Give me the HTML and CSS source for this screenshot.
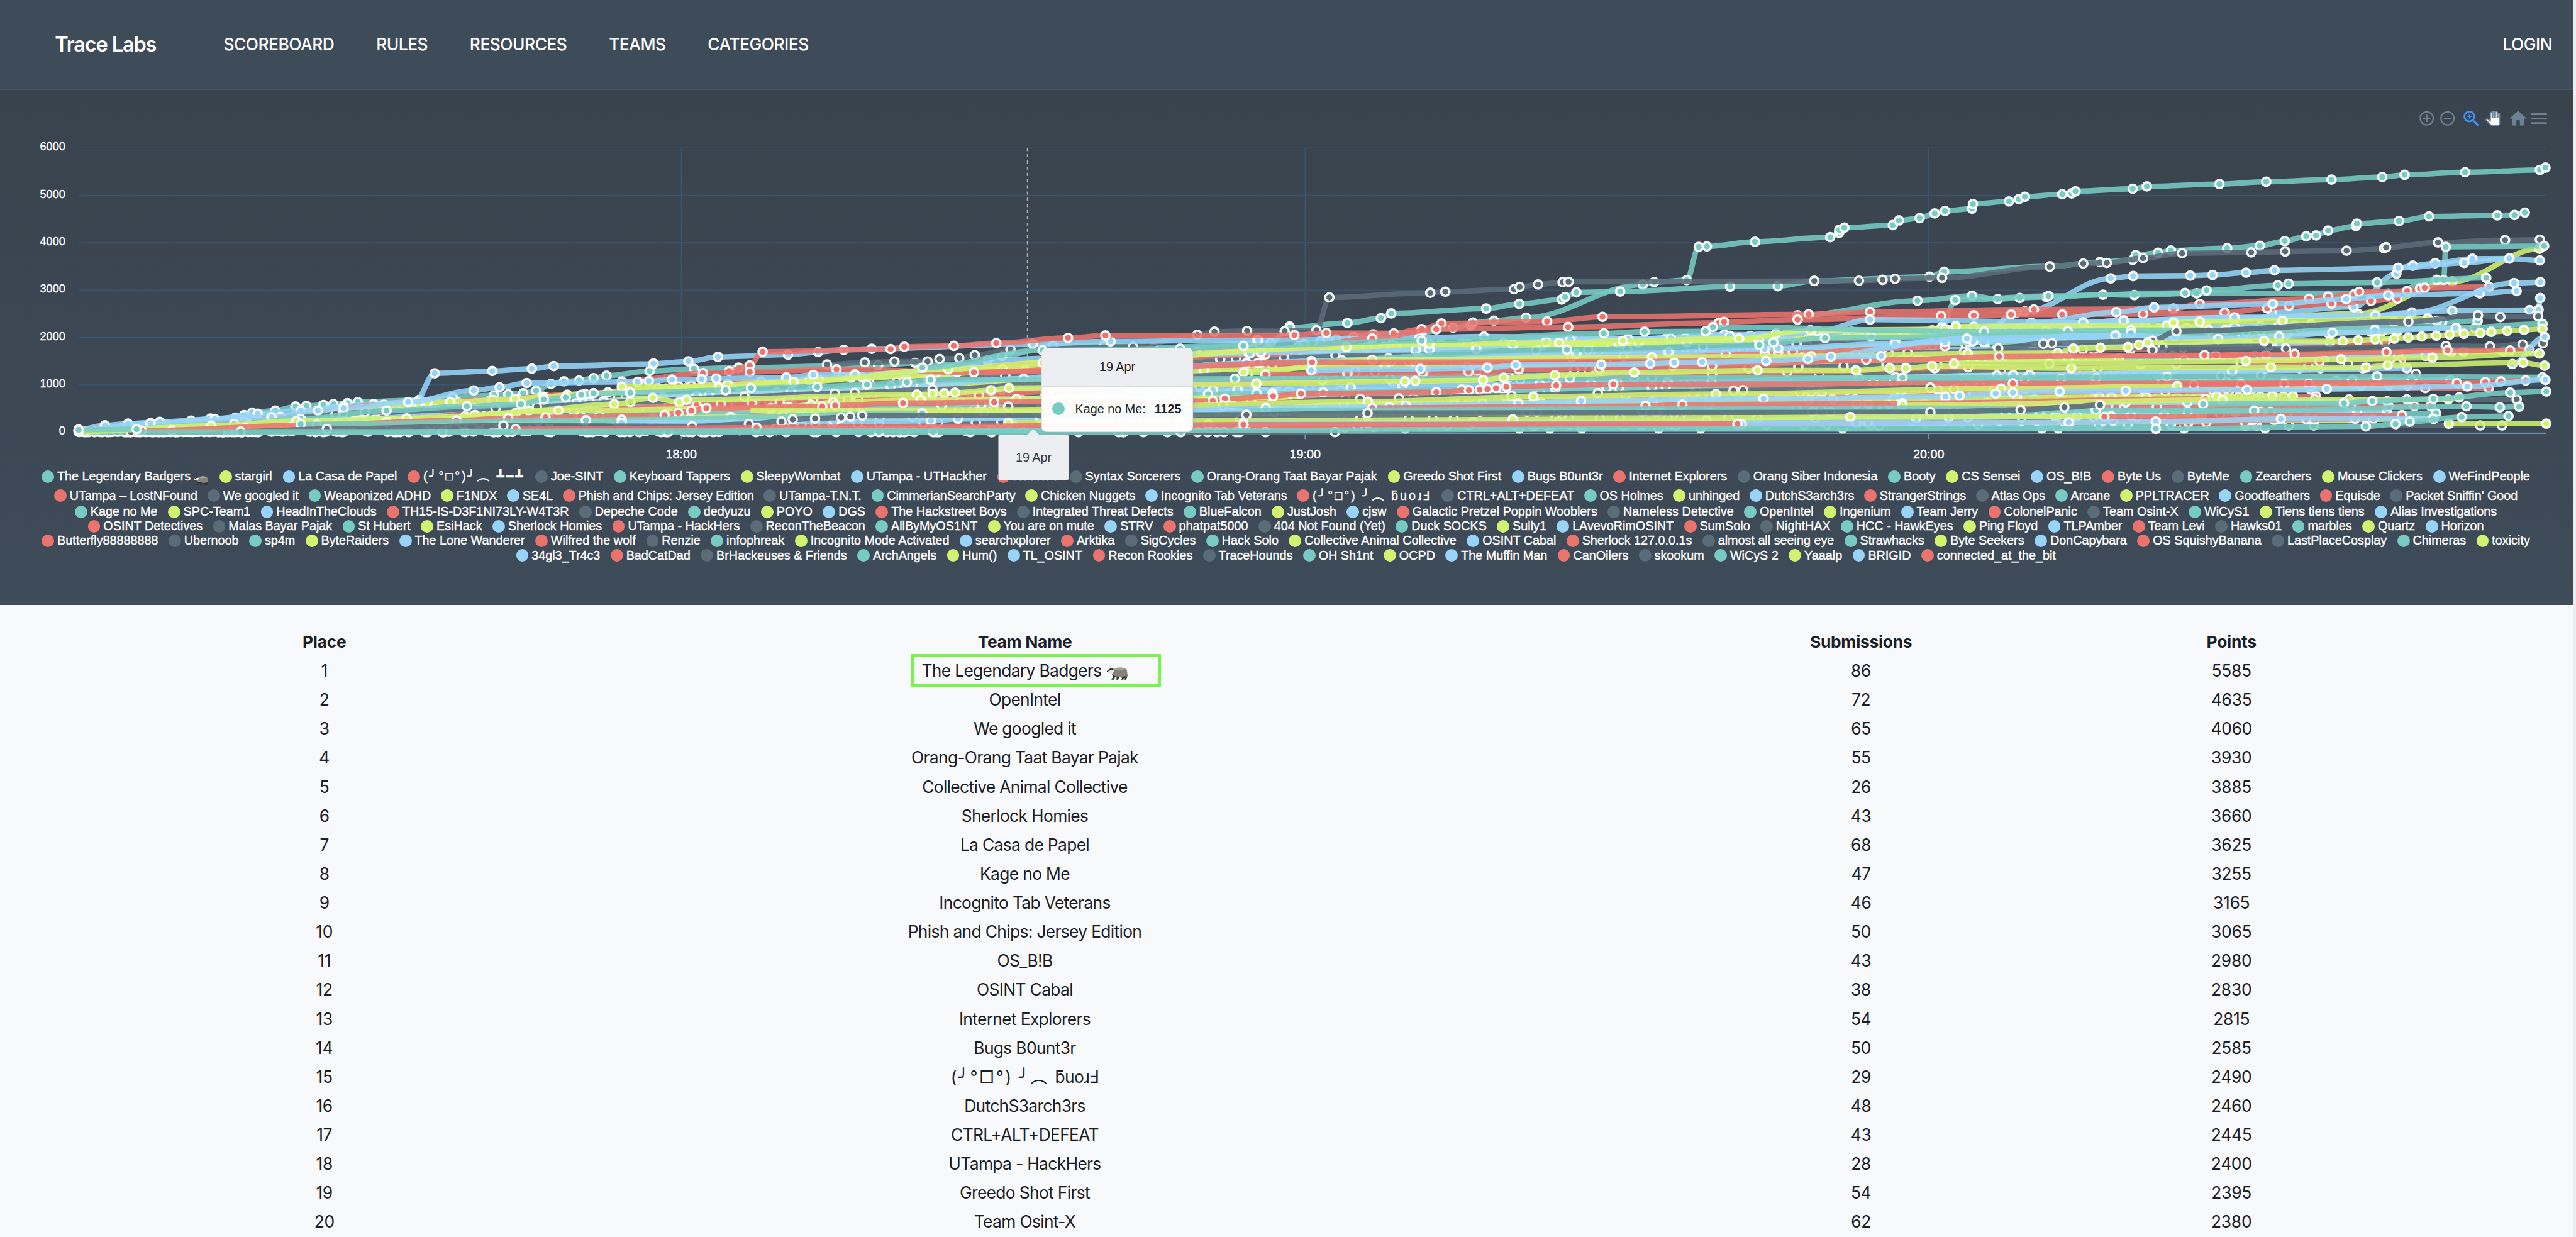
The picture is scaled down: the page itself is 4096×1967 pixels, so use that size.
FILE: index.html
```html
<!DOCTYPE html>
<html lang="en">
<head>
<meta charset="utf-8">
<title>Trace Labs Scoreboard</title>
<link rel="stylesheet" href="styles.css">
</head>
<body>
<div class="page">
  <nav class="navbar">
    <a class="brand">Trace Labs</a>
    <ul class="nav-links">
      <li>SCOREBOARD</li><li>RULES</li><li>RESOURCES</li><li>TEAMS</li><li>CATEGORIES</li>
    </ul>
    <a class="login">LOGIN</a>
  </nav>

  <section class="chart-panel">
    <svg class="chart" viewBox="0 174 4967 726" id="chart">
      <g id="grid"></g>
      <g id="series"></g>
      <g class="tools">
        <svg x="4667.2" y="212.2" width="33.6" height="33.6" viewBox="0 0 24 24"><path d="M13 7h-2v4H7v2h4v4h2v-4h4v-2h-4V7zm-1-5C6.48 2 2 6.48 2 12s4.48 10 10 10 10-4.48 10-10S17.52 2 12 2zm0 18c-4.41 0-8-3.59-8-8s3.59-8 8-8 8 3.59 8 8-3.59 8-8 8z"/></svg>
        <svg x="4707.2" y="212.2" width="33.6" height="33.6" viewBox="0 0 24 24"><path d="M7 11v2h10v-2H7zm5-9C6.48 2 2 6.48 2 12s4.48 10 10 10 10-4.48 10-10S17.52 2 12 2zm0 18c-4.41 0-8-3.59-8-8s3.59-8 8-8 8 3.59 8 8-3.59 8-8 8z"/></svg>
        <svg class="active" x="4750" y="209" width="41" height="41" viewBox="0 0 24 24"><path d="M15.5 14h-.79l-.28-.27C15.41 12.59 16 11.11 16 9.5 16 5.91 13.09 3 9.5 3S3 5.91 3 9.5 5.91 16 9.5 16c1.61 0 3.09-.59 4.23-1.57l.27.28v.79l5 4.99L20.49 19l-4.99-5zm-6 0C7.01 14 5 11.99 5 9.5S7.01 5 9.5 5 14 7.01 14 9.5 11.99 14 9.5 14z"/><path d="M12 10h-2v2H9v-2H7V9h2V7h1v2h2v1z"/></svg>
        <svg class="hand" x="4797" y="214" width="29" height="29" viewBox="0 0 24 24"><path d="M23 5.5V20c0 2.2-1.8 4-4 4h-7.3c-1.08 0-2.1-.43-2.85-1.19L1 14.83s1.26-1.23 1.3-1.25c.22-.19.49-.29.79-.29.22 0 .42.06.6.16.04.01 4.31 2.46 4.31 2.46V4c0-.83.67-1.5 1.5-1.5S11 3.17 11 4v7h1V1.5c0-.83.67-1.5 1.5-1.5S15 .67 15 1.5V11h1V2.5c0-.83.67-1.5 1.5-1.5s1.5.67 1.5 1.5V11h1V5.5c0-.83.67-1.5 1.5-1.5s1.5.67 1.5 1.5z"/></svg>
        <svg x="4840.3" y="209.3" width="40" height="40" viewBox="0 0 24 24"><path d="M10 20v-6h4v6h5v-8h3L12 3 2 12h3v8z"/></svg>
        <svg x="4880" y="208.8" width="41" height="41" viewBox="0 0 24 24"><path d="M3 18h18v-2H3v2zm0-5h18v-2H3v2zm0-7v2h18V6H3z"/></svg>
      </g>
    </svg>
    <div class="legend" id="legend"></div>
    <div class="tooltip">
      <div class="tooltip-title">19 Apr</div>
      <div class="tooltip-body"><i class="dot c0"></i><span>Kage no Me:</span><b>1125</b></div>
    </div>
    <div class="x-tooltip">19 Apr</div>
  </section>

  <section class="board">
    <table>
      <colgroup><col class="w-place"><col class="w-team"><col class="w-subs"><col class="w-points"></colgroup>
      <thead><tr><th>Place</th><th>Team Name</th><th>Submissions</th><th>Points</th></tr></thead>
      <tbody>
        <tr><td>1</td><td class="first">The Legendary Badgers <svg class="badger" viewBox="0 0 41 24"><use href="#badger"/></svg></td><td>86</td><td>5585</td></tr>
        <tr><td>2</td><td>OpenIntel</td><td>72</td><td>4635</td></tr>
        <tr><td>3</td><td>We googled it</td><td>65</td><td>4060</td></tr>
        <tr><td>4</td><td>Orang-Orang Taat Bayar Pajak</td><td>55</td><td>3930</td></tr>
        <tr><td>5</td><td>Collective Animal Collective</td><td>26</td><td>3885</td></tr>
        <tr><td>6</td><td>Sherlock Homies</td><td>43</td><td>3660</td></tr>
        <tr><td>7</td><td>La Casa de Papel</td><td>68</td><td>3625</td></tr>
        <tr><td>8</td><td>Kage no Me</td><td>47</td><td>3255</td></tr>
        <tr><td>9</td><td>Incognito Tab Veterans</td><td>46</td><td>3165</td></tr>
        <tr><td>10</td><td>Phish and Chips: Jersey Edition</td><td>50</td><td>3065</td></tr>
        <tr><td>11</td><td>OS_B!B</td><td>43</td><td>2980</td></tr>
        <tr><td>12</td><td>OSINT Cabal</td><td>38</td><td>2830</td></tr>
        <tr><td>13</td><td>Internet Explorers</td><td>54</td><td>2815</td></tr>
        <tr><td>14</td><td>Bugs B0unt3r</td><td>50</td><td>2585</td></tr>
        <tr><td>15</td><td><span class="flip">(╯°□°)<span class="arm">╯</span>︵ </span>ƃuoɹℲ</td><td>29</td><td>2490</td></tr>
        <tr><td>16</td><td>DutchS3arch3rs</td><td>48</td><td>2460</td></tr>
        <tr><td>17</td><td>CTRL+ALT+DEFEAT</td><td>43</td><td>2445</td></tr>
        <tr><td>18</td><td>UTampa - HackHers</td><td>28</td><td>2400</td></tr>
        <tr><td>19</td><td>Greedo Shot First</td><td>54</td><td>2395</td></tr>
        <tr><td>20</td><td>Team Osint-X</td><td>62</td><td>2380</td></tr>
      </tbody>
    </table>
  </section>
</div>
<svg class="defs" width="0" height="0"><defs>
  <g id="badger">
    <path d="M37 6c2 3 3 8 3 12l-2-1c0-4-1-7-3-9z" fill="#6b675f"/>
    <path d="M10 13l2 7-3 2v2h5l2-6 3 2-1 3v1h4l2-6h4l1 4-1 1v1h4l1-5 2 3-1 2h3l2-5-2-6z" fill="#33312d"/>
    <path d="M11 5c5-5 19-6 25-2 4 3 4 9 2 14-6 2-18 2-25-1-4-2-5-7-2-11z" fill="#85827a"/>
    <path d="M13 4c6-4 17-4 22 0-5 2-16 3-22 0z" fill="#a5a299"/>
    <path d="M0 8c3-4 7-7 12-6l2 5-3 5c-4 1-9 0-11-4z" fill="#e9e4dc"/>
    <path d="M2 6c3-3 6-5 10-4l1 3c-4-1-7 1-10 3z" fill="#33302c"/>
    <circle cx="1" cy="8" r="1.2" fill="#222"/>
  </g>
</defs></svg>
<script src="chart.js"></script>
</body>
</html>
```
FILE: styles.css
```css
:root {
  --u: 0.823813px;
  --white: #fff;
}
*, *::before, *::after { box-sizing: border-box; }
html, body { margin: 0; height: 100%; }
body {
  background: #ededed;
  overflow: hidden;
  font-family: Inter, "Noto Sans", "DejaVu Sans", "Noto Sans CJK JP", sans-serif;
  font-size: calc(32 * var(--u));
  color: #1b2027;
}
.page {
  width: calc(4967 * var(--u));
  height: calc(2388 * var(--u));
  overflow: hidden;
  background: #f8f9fb;
}
.defs { position: absolute; }

.navbar {
  display: flex;
  align-items: center;
  height: calc(174 * var(--u));
  padding: 0 calc(41 * var(--u)) calc(2 * var(--u)) calc(106 * var(--u));
  background: #3e4b58;
  border-bottom: calc(2 * var(--u)) solid #445564;
  color: var(--white);
  font-weight: 500;
}
.brand {
  width: calc(325.5 * var(--u));
  font-size: calc(39.5 * var(--u));
  font-weight: 600;
  letter-spacing: calc(-1.4 * var(--u));
}
.nav-links {
  display: flex;
  flex: 1;
  gap: calc(81 * var(--u));
  margin: 0;
  padding: 0;
  list-style: none;
}
.nav-links, .login { letter-spacing: calc(-0.6 * var(--u)); }

.chart-panel {
  position: relative;
  height: calc(994 * var(--u));
  background: linear-gradient(#39434e, #3e4b58);
}
.chart { display: block; width: 100%; height: calc(726 * var(--u)); }
.chart text { font-family: "Liberation Sans", Arial, sans-serif; fill: #fff; stroke: #fff; stroke-width: .5; }
.y-label { font-size: 22px; text-anchor: end; }
.x-label { font-size: 24px; text-anchor: middle; }
.grid-line { stroke: #3b536b; stroke-width: 2; }
.axis { stroke: #78909c; stroke-width: 2; }
.cursor { stroke: #b6b6b6; stroke-width: 2; stroke-dasharray: 6; }
.line { fill: none; stroke-width: 10.4; stroke-opacity: .87; }
.mark { stroke: #fff; stroke-width: 4.4; stroke-opacity: .93; }
.tools { fill: #6e8192; }
.tools .active { fill: #4492f7; }
.tools .hand { fill: #fff; stroke: #6e8192; stroke-width: 2; }

.legend {
  display: flex;
  flex-direction: column;
  align-items: center;
  padding: calc(6 * var(--u)) calc(3 * var(--u)) 0 0;
  font: calc(24 * var(--u))/calc(28 * var(--u)) "Liberation Sans", "Noto Sans", "DejaVu Sans", "Noto Sans CJK JP", sans-serif;
  color: #fff;
  -webkit-text-stroke: .4px #fff;
}
.legend-row {
  display: flex;
  justify-content: space-between;
  height: calc(28 * var(--u));
  white-space: nowrap;
}
.legend-row:nth-child(1) { margin-bottom: calc(9 * var(--u)); }
.legend-row:nth-child(2) { margin-bottom: calc(3 * var(--u)); }
.item { display: flex; align-items: center; gap: calc(6 * var(--u)); }
.item .badger { width: calc(29 * var(--u)); height: calc(17 * var(--u)); margin-top: calc(14 * var(--u)); }
.flip { letter-spacing: .1em; }
.arm { margin-left: .35em; }
.item .flip { letter-spacing: .15em; }
.dot {
  width: calc(24 * var(--u));
  height: calc(24 * var(--u));
  border-radius: 50%;
  flex: none;
}
.c0 { background: #77cbc3; }
.c1 { background: #d2f271; }
.c2 { background: #97d4f8; }
.c3 { background: #ea736d; }
.c4 { background: #5b6c79; }

.tooltip {
  position: absolute;
  left: calc(2010 * var(--u));
  top: calc(497 * var(--u));
  width: calc(293 * var(--u));
  height: calc(163 * var(--u));
  border: calc(2 * var(--u)) solid #e3e3e3;
  border-radius: calc(10 * var(--u));
  overflow: hidden;
  background: rgba(255, 255, 255, .96);
  box-shadow: 2px 2px 10px -4px #999;
  font: calc(24 * var(--u)) "Liberation Sans", Arial, sans-serif;
}
.tooltip-title {
  display: flex;
  align-items: center;
  justify-content: center;
  height: calc(74 * var(--u));
  background: #eceef1;
  border-bottom: calc(2 * var(--u)) solid #dadcdf;
}
.tooltip-body {
  display: flex;
  align-items: center;
  height: calc(86 * var(--u));
  padding-left: calc(20 * var(--u));
}
.tooltip-body .dot { margin-right: calc(20 * var(--u)); }
.tooltip-body b { margin-left: calc(17 * var(--u)); }
.x-tooltip {
  position: absolute;
  left: calc(1926 * var(--u));
  top: calc(665 * var(--u));
  width: calc(138 * var(--u));
  height: calc(88 * var(--u));
  display: flex;
  align-items: center;
  justify-content: center;
  background: #eceef1;
  border: calc(2 * var(--u)) solid #90a4ae;
  border-radius: calc(4 * var(--u));
  font: calc(24 * var(--u)) "Liberation Sans", Arial, sans-serif;
  color: #373d3f;
}
.x-tooltip::before {
  content: "";
  position: absolute;
  left: 50%;
  top: calc(-12 * var(--u));
  margin-left: calc(-12 * var(--u));
  border: calc(12 * var(--u)) solid transparent;
  border-top: 0;
  border-bottom-color: #eceef1;
}

.board { padding: calc(43 * var(--u)) 0 0 calc(2 * var(--u)); }
table {
  width: calc(4134 * var(--u));
  margin: 0 auto;
  table-layout: fixed;
  border-collapse: collapse;
  text-align: center;
}
.w-place { width: calc(417 * var(--u)); }
.w-team { width: calc(2287 * var(--u)); }
.w-subs { width: calc(941 * var(--u)); }
.w-points { width: calc(489 * var(--u)); }
th, td {
  height: calc(56 * var(--u));
  padding: 0;
  line-height: calc(48 * var(--u));
  letter-spacing: calc(-0.35 * var(--u));
}
td:nth-child(2) { letter-spacing: calc(-0.8 * var(--u)); }
th { font-weight: 700; }
.board .badger { width: calc(41 * var(--u)); height: calc(24 * var(--u)); margin-left: calc(2 * var(--u)); vertical-align: calc(-6 * var(--u)); }
.first { position: relative; }
.first::after {
  content: "";
  position: absolute;
  left: calc(925 * var(--u));
  top: calc(-5 * var(--u));
  width: calc(481 * var(--u));
  height: calc(63 * var(--u));
  border: calc(5 * var(--u)) solid #78f54a;
}
```
FILE: chart.js
```js
const COLORS = ['#77cbc3', '#d2f271', '#97d4f8', '#ea736d', '#5b6c79'];
const T = 0, L = 1, B = 2, R = 3, G = 4;
const Y0 = 834.6, STEP = 91.43;
const NS = 'http://www.w3.org/2000/svg';

function add(parent, tag, attrs, text) {
  const el = document.createElementNS(NS, tag);
  for (const k in attrs) el.setAttribute(k, attrs[k]);
  if (text) el.textContent = text;
  parent.appendChild(el);
}

// Time windows: each maps its own samples to chart coordinates.
const win = (x0, y0, sx, sy) => (...p) => {
  const out = [];
  for (let i = 0; i < p.length; i += 2) out.push([x0 + p[i] / sx, y0 + p[i + 1] / sy]);
  return out;
};
const w17 = win(0, 250, 1.2062, 2.45);
const w18 = win(1200, 550, 1.2062, 3);
const w19 = win(2400, 250, 1.2062, 2.45);
const w20 = win(3672, 250, 1.2062, 2.45);

const grid = document.getElementById('grid');
for (let v = 0; v <= 6; v++) {
  const y = Y0 - v * STEP;
  add(grid, 'line', { class: 'grid-line', x1: 152, x2: 4914, y1: y, y2: y });
  add(grid, 'text', { class: 'y-label', x: 126, y: y + 5 }, String(v * 1000));
}
[[1315, '18:00'], [2519, '19:00'], [3722.6, '20:00']].forEach(([x, t]) => {
  add(grid, 'line', { class: 'grid-line', x1: x, x2: x, y1: 286, y2: 836 });
  add(grid, 'line', { class: 'axis', x1: x, x2: x, y1: 836, y2: 848 });
  add(grid, 'text', { class: 'x-label', x, y: 885 }, t);
});
add(grid, 'line', { class: 'axis', x1: 152, x2: 4914, y1: 837, y2: 837 });
add(grid, 'line', { class: 'cursor', x1: 1983, x2: 1983, y1: 286, y2: 836 });

const root = document.getElementById('series');
function draw(color, pts, hidden) {
  let d = '';
  pts.forEach(([x, y], i) => {
    if (!i) { d = `M${x.toFixed(1)} ${y.toFixed(1)}`; return; }
    const [px, py] = pts[i - 1], k = (x - px) * 0.35;
    d += `C${(px + k).toFixed(1)} ${py.toFixed(1)} ${(x - k).toFixed(1)} ${y.toFixed(1)} ${x.toFixed(1)} ${y.toFixed(1)}`;
  });
  add(root, 'path', { class: 'line', d, stroke: COLORS[color] });
  pts.forEach(([x, y], i) => {
    if (hidden && hidden(i)) return;
    add(root, 'circle', { class: 'mark', cx: x.toFixed(1), cy: y.toFixed(1), r: 8, fill: COLORS[color] });
  });
}

// Leading teams
draw(T, [...w17(183,1421,318,1418,388,1395,445,1378,490,1368,548,1364,568,1352,587,1340,641,1330,688,1311,713,1308,753,1304,776,1300,809,1295,833,1290,976,1280,1054,1268,1150,1258,1183,1253,1218,1248,1248,1236,1283,1204,1313,1192,1348,1188,1382,1177,1412,1165),
  ...w18(65,500,168,487,272,480,597,466,683,453,852,480,1411,465),
  ...w19(33,1105,128,1027,141,1016,179,1004,216,993,256,982,302,970,415,960,488,938,529,927,534,914,583,905,658,891,930,735,956,723,1032,713,1060,556,1079,554,1191,532,1366,510,1387,490,1387,476,1399,465,1512,453,1526,431),
  ...w20(40,420,75,398,99,386,162,375,164,353,248,341,271,330,285,319,372,307,394,303,403,293,536,281,569,270,738,259,847,248,999,238,1117,226,1169,215,1310,203,1484,192,1497,181)]);
draw(T, [...w18(852,438,886,412,1004,353,1122,353,1238,365,1511,337,1555,242),
  ...w19(108,938,242,916,320,893,344,871,565,848,642,826,741,805,749,793,775,771,877,767,1133,744,1244,742,1329,717),
  ...w20(63,697,97,674,343,648,460,628,536,618,543,595,595,584,625,573,756,562,832,551,890,529,940,506,963,502,991,479,1056,457,1058,446,1156,434,1226,412,1385,407,1425,405,1449,394)]);
draw(G, [...w18(478,462,566,450,635,445,712,445,740,430,786,425,822,408,905,375,1190,360,1340,290,1380,272,1456,268),
  ...w19(96,955,170,950,200,795,435,773,470,768,630,756,643,745,686,734,743,723,757,721,1329,717,1433,716,1488,712,1517,707),
  ...w20(92,703,343,650,421,635,476,632,560,609,651,586,812,582,891,578,1034,574,1121,563,1126,558,1247,535,1403,524,1484,522)]);
draw(L, w20(700,905,1060,872,1280,720,1483,565));
draw(T, [...w19(1290,880), ...w20(35,811,162,787,222,803,273,798,335,793,467,782,540,784,685,776,1131,777,1244,712,1260,713,1265,556,1494,552)]);
draw(B, [...w17(183,1421,244,1400,298,1392,372,1384,500,1370,600,1345,700,1330,800,1310,870,1300,965,1295,1012,1154,1146,1143,1238,1132,1289,1120,1521,1109),
  ...w18(74,457,155,444,224,418,387,405,457,390,517,377,582,371,957,343,1138,328,1480,320),
  ...w19(34,997,410,985,560,980,896,992,1120,970), ...w20(182,980,265,867,285,861,485,705,537,694,670,692,722,689,800,678,866,667,1154,656,1188,645,1240,633,1327,612,1413,611)]);
draw(B, w20(860,866,1050,840,1150,683,1154,656,1308,632,1413,611,1484,620));
draw(T, w20(92,935,123,808,340,788,658,774,708,762,874,738,899,730,1105,724,1359,703));

// The field: seeded so the chart is identical on every load.
let seed = 20240419;
const rnd = () => (seed = (seed * 1664525 + 1013904223) % 4294967296) / 4294967296;
const env = [[152, 40], [400, 300], [650, 560], [950, 700], [1315, 1000], [1900, 1380], [2300, 1800], [2700, 1950], [3300, 2080], [3700, 2250], [4300, 2400], [4910, 2550]];
function cap(x) {
  for (let i = 1; i < env.length; i++) if (x <= env[i][0]) {
    const [a, u] = env[i - 1], [b, v] = env[i];
    return u + (v - u) * (x - a) / (b - a);
  }
  return 2550;
}
for (let s = 0; s < 84; s++) {
  const f = 0.04 + 0.92 * (s * 0.618 % 1), pts = [];
  const start = rnd() < .75 ? 152 + rnd() * 350 : 600 + rnd() * 1200;
  const drift = (rnd() - .5) * .35;
  let x = start, last = 0;
  const end = 4100 + rnd() * 810;
  pts.push([x, Y0 - rnd() * .5]);
  while (true) {
    const slow = x > 2300 ? 1.5 : 1;
    x += slow * (rnd() < .5 ? 12 + rnd() * 55 : 60 + rnd() * 210);
    if (x > end) break;
    const g = Math.min(.97, Math.max(.02, f + drift * ((x - 152) / 4762 - .5)));
    const ease = Math.min(1, (x - start) / 500 + .08);
    const v = cap(x) * g * ease;
    last = Math.max(last, Math.round(v / 10) * 10);
    pts.push([x, Y0 - last * STEP / 1000]);
  }
  draw((s * 2 + (s >> 2)) % 5, pts);
}
// Teams that registered without scoring yet
for (let s = 0; s < 9; s++) {
  const pts = [];
  for (let x = 160 + rnd() * 300; x < 2600; x += 60 + rnd() * 420) pts.push([x, Y0]);
  draw(s % 2 ? G : T, pts);
}

// Upper pack
draw(R, [...w18(250,500,298,468,328,388,626,373,658,359,773,354,872,338,1039,308,1126,294,1566,292), ...w19(193,963,350,965,415,945,461,918,707,909,836,887,1316,875,1459,864),
  ...w20(306,852,631,848,692,826,947,802,991,791,1052,780,1063,769,1175,765,1205,753,1216,749,1366,745)]);
draw(R, [...w18(0,560,189,512,298,505,500,490,820,507), ...w19(51,1065,300,990,449,946,756,935,1107,915,1119,911,1290,900), ...w20(90,883,166,880,253,876,372,876,560,874,750,867,849,847,900,835,999,824,1091,812,1152,801)]);
draw(B, w20(300,915,498,865,586,842,862,826,1033,803,1131,785,1344,776,1430,765));
draw(B, [...w19(1200,1000,1337,954,1459,900), ...w20(420,914,515,904,773,890,1101,880,1186,866,1424,727,1485,723)]);
draw(B, [...w17(183,1425,350,1390,632,1362,740,1330,800,1318,950,1290,1103,1235,1163,1220,1226,1200,1485,1194),
  ...w18(37,563,63,558,117,550,186,547,220,543,383,537,446,522,543,520,1000,425,1460,398,1488,392),
  ...w19(15,1060,41,1055,401,1043,433,1042,542,1039,627,1018,705,1005,761,994,896,992,995,988,1132,976,1240,965,1337,954),
  ...w20(69,951,91,938,166,934,421,914,515,904,773,890,1101,880,1280,858,1460,855,1481,853,1485,798)]);
draw(L, [...w18(0,590,226,595,400,563,760,490,980,452), ...w19(240,1030,433,1014,735,1010,883,1000,1154,990,1320,950), ...w20(99,945,124,932,615,928,631,914,692,910,885,906,1223,894)]);
draw(T, [...w18(700,480,980,380,1300,370), ...w19(0,1024,415,1000,839,965,934,957,1076,955,1093,935), ...w20(190,957,385,955,532,950,713,950,926,942,1289,939,1490,920)]);
draw(T, [...w19(33,1105,753,1042,1201,1020,1234,1008,1354,987), ...w20(532,965,1100,950)]);
draw(B, [...w19(1000,1120,1300,1080), ...w20(150,990,496,975,735,992,877,980,1001,962,1288,940)]);
draw(G, w20(223,1036,328,1014,348,1012,582,1000,638,955,1178,910,1340,880,1392,888,1480,884));
draw(L, [...w19(0,1150,300,1090,951,1078,1322,1073), ...w20(152,1060,361,1058,398,1037,461,1033,525,1030,551,1019,571,1008,842,1001,1025,1003,1061,998,1101,994,1145,990,1178,985,1209,980,1243,976,1274,971,1307,967,1345,963,1371,958,1408,953,1447,949,1490,944)]);
draw(G, w20(582,1045,893,1037,1265,1025,1368,1027,1444,1018,1491,1012));
draw(R, [...w18(820,507,1000,500), ...w19(160,1102,700,1100,1200,1096), ...w20(0,1090,225,1075,703,1068,913,1062,1127,1053,1269,1045,1415,1046,1460,1042)], i => i > 2 && i < 6);
draw(B, w20(1420,1110,1495,982));
draw(R, w19(51,1160,242,1156,417,1151,524,1147,641,1135,828,1130,1091,1120,1450,1090));
draw(B, w19(158,1140,412,1133,568,1128,634,1115,833,1112,947,1108,1003,1104,1068,1101,1217,1096,1314,1086,1368,1075,1485,1073));

// Mid and lower pack
draw(T, [...w17(183,1428,545,1394,700,1370,900,1330,1087,1310,1213,1300,1266,1278,1317,1268,1353,1256,1382,1248,1467,1246),
  ...w18(20,625,242,611,301,598,455,592,571,578,664,565,719,551), ...w19(-20,1180,760,1178), ...w20(0,1175,1105,1168,1490,1173)]);
draw(L, [...w17(183,1430,492,1402,690,1379,947,1367,1083,1357,1106,1351,1201,1340,1231,1330,1430,1300,1520,1270),
  ...w18(134,680,151,667,687,636,724,632,751,629,776,625,860,611,902,598,1477,575),
  ...w19(30,1202,376,1192,400,1190,558,1186,606,1175,725,1163,910,1150,1197,1140,1426,1140,1505,1130,1542,1129),
  ...w20(8,1130,69,1120,393,1130,858,1125,1079,1127,1130,1115,1445,1104,1495,1118)]);
draw(L, w20(120,1108,800,1096,1021,1087,1234,1080,1483,1060));
draw(L, [...w17(400,1425,572,1413,678,1408,900,1385,1300,1330), ...w18(347,714,389,708,441,695,492,680,696,667,919,662,1566,652)]);
draw(R, [...w17(330,1425,738,1398,1063,1377,1183,1366,1270,1363,1548,1352), ...w18(100,755,132,742,162,729,197,715,467,705,497,700,655,685,867,680,1376,673,1404,660,1516,646),
  ...w19(69,1262,134,1250,449,1243,525,1234,550,1232,568,1229,588,1224,612,1218,728,1211,861,1206),
  ...w20(257,1202,1291,1200,1357,1196,1393,1192,1451,1188)]);
draw(G, [...w18(900,706,1400,700), ...w19(272,1275,362,1272,624,1260,825,1248,1141,1236,1163,1234), ...w20(65,1222)]);
draw(L, [...w18(300,728,900,724), ...w19(290,1288,675,1265,1100,1252), ...w20(230,1226,640,1215)], i => i < 2);
draw(T, [...w17(700,1395,1364,1376), ...w18(0,782,700,745)]);
draw(B, [...w18(0,800,495,795,720,788,783,777,974,770), ...w19(52,1318,340,1313,378,1307,640,1297,786,1285,1211,1274),
  ...w20(100,1264,133,1260,217,1250,257,1245,366,1240,520,1236,802,1232,988,1228,1315,1216,1497,1185)]);
draw(R, [...w19(300,1318,936,1308,1022,1303), ...w20(0,1296,705,1275)]);
draw(L, w20(0,1305,745,1280,1271,1278,1296,1268));
draw(T, w20(700,1300,1028,1295,1094,1285,1236,1275,1415,1245,1499,1240));
draw(T, [...w19(0,1330,900,1322), ...w20(0,1318,450,1328,819,1330,1313,1310,1391,1315,1436,1312)], i => i < 3);
draw(G, [...w17(560,1430,761,1417,1172,1402), ...w18(164,821,296,807,372,793,398,780,450,775,511,769,532,764,560,758), ...w19(7,1350,289,1342), ...w20(65,1338,275,1327,377,1315,460,1304)]);
draw(L, [...w18(900,800,1300,790), ...w19(627,1372,1413,1361), ...w20(486,1357)]);
draw(R, w20(470,1360,1163,1352));
draw(B, [...w19(0,1390,1160,1395), ...w20(387,1386,590,1382,881,1370,1235,1368)]);
draw(R, [...w17(1200,1418), ...w18(314,828,1300,812), ...w19(0,1397,1150,1394)]);
draw(L, w20(1272,1392,1499,1392));
draw(T, [...w17(318,1431,900,1430), ...w18(0,848,1566,843), ...w19(700,1418), ...w20(590,1416,1079,1405,1148,1394,1181,1383,1302,1361,1411,1356)], i => i < 5);
draw(T, w17(183,1421,318,1418));

const rows = [
  [4803, 'The Legendary Badgers|stargirl|La Casa de Papel|(╯°□°)╯︵ ┻━┻|Joe-SINT|Keyboard Tappers|SleepyWombat|UTampa - UTHackher|Recon 3|Syntax Sorcerers|Orang-Orang Taat Bayar Pajak|Greedo Shot First|Bugs B0unt3r|Internet Explorers|Orang Siber Indonesia|Booty|CS Sensei|OS_B!B|Byte Us|ByteMe|Zearchers|Mouse Clickers|WeFindPeople'],
  [4755, 'UTampa – LostNFound|We googled it|Weaponized ADHD|F1NDX|SE4L|Phish and Chips: Jersey Edition|UTampa-T.N.T.|CimmerianSearchParty|Chicken Nuggets|Incognito Tab Veterans|(╯°□°) ╯︵ ƃuoɹℲ|CTRL+ALT+DEFEAT|OS Holmes|unhinged|DutchS3arch3rs|StrangerStrings|Atlas Ops|Arcane|PPLTRACER|Goodfeathers|Equisde|Packet Sniffin\' Good'],
  [4675, 'Kage no Me|SPC-Team1|HeadInTheClouds|TH15-IS-D3F1NI73LY-W4T3R|Depeche Code|dedyuzu|POYO|DGS|The Hackstreet Boys|Integrated Threat Defects|BlueFalcon|JustJosh|cjsw|Galactic Pretzel Poppin Wooblers|Nameless Detective|OpenIntel|Ingenium|Team Jerry|ColonelPanic|Team Osint-X|WiCyS1|Tiens tiens tiens|Alias Investigations'],
  [4625, 'OSINT Detectives|Malas Bayar Pajak|St Hubert|EsiHack|Sherlock Homies|UTampa - HackHers|ReconTheBeacon|AllByMyOS1NT|You are on mute|STRV|phatpat5000|404 Not Found (Yet)|Duck SOCKS|Sully1|LAvevoRimOSINT|SumSolo|NightHAX|HCC - HawkEyes|Ping Floyd|TLPAmber|Team Levi|Hawks01|marbles|Quartz|Horizon'],
  [4803, 'Butterfly88888888|Ubernoob|sp4m|ByteRaiders|The Lone Wanderer|Wilfred the wolf|Renzie|infophreak|Incognito Mode Activated|searchxplorer|Arktika|SigCycles|Hack Solo|Collective Animal Collective|OSINT Cabal|Sherlock 127.0.0.1s|almost all seeing eye|Strawhacks|Byte Seekers|DonCapybara|OS SquishyBanana|LastPlaceCosplay|Chimeras|toxicity'],
  [2972, '34gl3_Tr4c3|BadCatDad|BrHackeuses & Friends|ArchAngels|Hum()|TL_OSINT|Recon Rookies|TraceHounds|OH Sh1nt|OCPD|The Muffin Man|CanOilers|skookum|WiCyS 2|Yaaalp|BRIGID|connected_at_the_bit'],
];
const legend = document.getElementById('legend');
let n = 0;
rows.forEach(([width, names]) => {
  const row = document.createElement('div');
  row.className = 'legend-row';
  row.style.width = `calc(${width} * var(--u))`;
  names.split('|').forEach((name) => {
    const item = document.createElement('span');
    item.className = 'item';
    item.innerHTML = `<i class="dot c${n % 5}"></i><span></span>`;
    item.lastChild.textContent = name;
    if (name[0] === '(') item.lastChild.className = 'flip';
    if (!n) item.insertAdjacentHTML('beforeend', '<svg class="badger" viewBox="0 0 41 24"><use href="#badger"/></svg>');
    row.appendChild(item);
    n++;
  });
  legend.appendChild(row);
});
```
